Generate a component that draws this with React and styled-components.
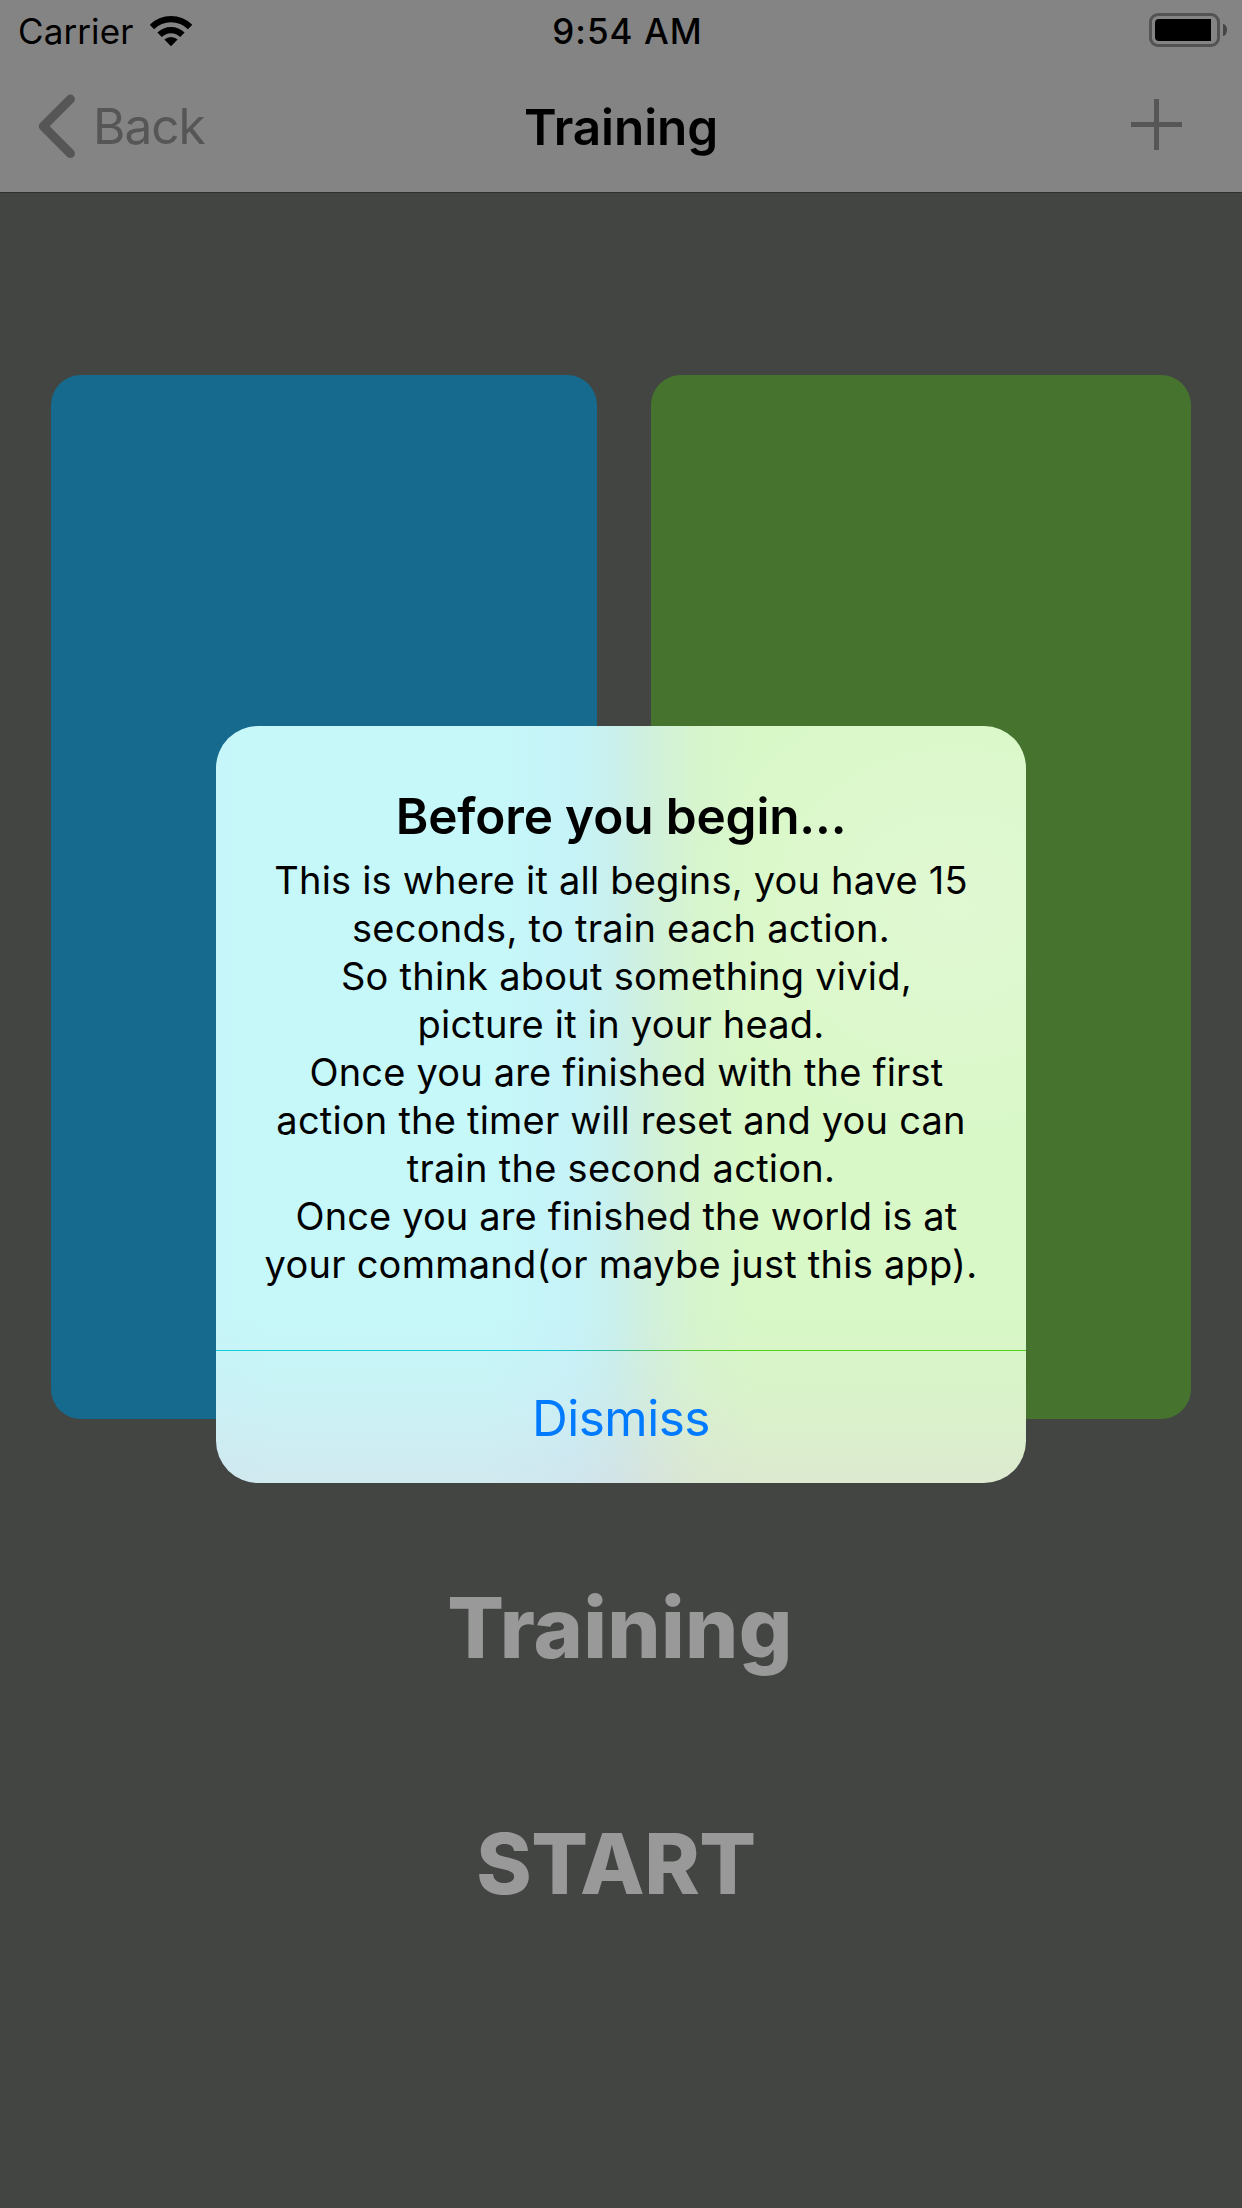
import React from "react";
import styled, { createGlobalStyle } from "styled-components";

const GlobalStyle = createGlobalStyle`
  *, *::before, *::after { box-sizing: border-box; }
  body {
    margin: 0;
    background: #434543;
    font-family: Inter, "Liberation Sans", sans-serif;
  }
  button {
    border: 0;
    padding: 0;
    background: none;
    font-family: inherit;
    cursor: pointer;
  }
`;

const Screen = styled.div`
  position: relative;
  display: flex;
  flex-direction: column;
  width: 1242px;
  height: 2208px;
  overflow: hidden;
  background: #434543;
`;

const Header = styled.header`
  height: 193px;
  background: #848484;
  border-bottom: 1px solid #2f312f;
`;

const StatusBar = styled.div`
  display: grid;
  grid-template-columns: 1fr auto 1fr;
  align-items: center;
  height: 60px;
  padding: 2px 15px 0 18px;
  font-size: 35px;
  line-height: 58px;
  color: #000;
`;

const Carrier = styled.div`
  display: flex;
  align-items: center;
  gap: 17px;
  letter-spacing: 0.1px;
`;

const Clock = styled.time`
  padding-left: 10px;
  font-weight: 500;
  letter-spacing: 1.05px;
`;

const Battery = styled.div`
  display: flex;
  justify-self: end;
  align-items: center;
  gap: 3px;
  margin-top: -2px;
`;

const BatteryBody = styled.div`
  width: 71px;
  height: 34px;
  padding: 3px;
  border: 3px solid #535353;
  border-radius: 9px;
`;

const BatteryLevel = styled.div`
  width: 56px;
  height: 22px;
  border-radius: 4px 0 0 4px;
  background: #000;
`;

const BatteryCap = styled.div`
  width: 4px;
  height: 12px;
  border-radius: 0 4px 4px 0 / 0 6px 6px 0;
  background: #454545;
`;

const NavBar = styled.nav`
  display: grid;
  grid-template-columns: 1fr auto 1fr;
  align-items: center;
  height: 132px;
  padding: 0 60px 0 38px;
`;

const BackButton = styled.button`
  display: flex;
  justify-self: start;
  align-items: center;
  gap: 17px;
  font-size: 49.5px;
  line-height: 60px;
  letter-spacing: -1px;
  color: #565656;
`;

const NavTitle = styled.h1`
  margin: 0;
  padding: 2px 0 0 22px;
  font-size: 49.5px;
  font-weight: 600;
  line-height: 60px;
  letter-spacing: -0.1px;
  color: #000;
`;

const AddButton = styled.button`
  display: flex;
  justify-self: end;
  margin-top: -3px;
`;

const Content = styled.main`
  display: flex;
  flex: 1;
  flex-direction: column;
  align-items: center;
  padding-top: 182px;
`;

const Cards = styled.section`
  display: flex;
  gap: 54px;
  height: 1044px;
`;

const Card = styled.div`
  width: ${(p) => p.$width}px;
  border-radius: 30px;
  background: ${(p) => p.$color};
`;

const PhaseLabel = styled.h2`
  margin: 158px 2px 0 0;
  font-size: 84px;
  font-weight: 800;
  line-height: 102px;
  letter-spacing: 0.27px;
  color: #999;
`;

const StartButton = styled.button`
  margin: 134px 10px 0 0;
  font-size: 84px;
  font-weight: 800;
  line-height: 102px;
  letter-spacing: -0.5px;
  color: #999;
`;

const Overlay = styled.div`
  position: absolute;
  inset: 0;
  display: flex;
  align-items: center;
  justify-content: center;
  padding-top: 1px;
`;

const Dialog = styled.div`
  width: 810px;
  border-radius: 42px;
  overflow: hidden;
  background:
    linear-gradient(
      to bottom,
      rgba(228, 206, 222, 0) 590px,
      rgba(228, 206, 222, 0.1) 660px,
      rgba(228, 206, 222, 0.35) 757px
    ),
    radial-gradient(
      300px 260px at 740px 180px,
      rgba(235, 248, 224, 0.45),
      rgba(235, 248, 224, 0)
    ),
    linear-gradient(
      to right,
      #c6f6f9 0,
      #c6f8f9 60px,
      #c6f8f9 270px,
      #c6f3f8 355px,
      #c9f0ec 398px,
      #d1f0dc 435px,
      #d6f5cd 480px,
      #d8f8c7 540px,
      #d8f8c7 810px
    );
`;

const DialogBody = styled.div`
  padding: 60px 0 62px;
  text-align: center;
  color: #000;
`;

const DialogTitle = styled.h3`
  margin: 0 0 9px;
  font-size: 49.5px;
  font-weight: 600;
  line-height: 61px;
  letter-spacing: -0.14px;
`;

const Message = styled.div`
  font-size: 38px;
  line-height: 48px;
  white-space: pre;
`;

const MessageLine = styled.div`
  letter-spacing: ${(p) => p.$tracking}px;
`;

const Divider = styled.div`
  height: 1px;
  background: linear-gradient(
    to right,
    #12cfd9 0,
    #12cad9 330px,
    #2fb89a 400px,
    #50c83c 450px,
    #50d018 520px
  );
`;

const DismissButton = styled.button`
  display: block;
  width: 100%;
  height: 132px;
  padding: 2px 0 0;
  font-size: 49.5px;
  line-height: 60px;
  letter-spacing: -0.5px;
  color: #007aff;
`;

const lines = [
  { text: "This is where it all begins, you have 15", tracking: 0.19 },
  { text: "seconds, to train each action.", tracking: 0.28 },
  { text: " So think about something vivid,", tracking: 0.26 },
  { text: "picture it in your head.", tracking: 0.22 },
  { text: " Once you are finished with the first", tracking: 0.17 },
  { text: "action the timer will reset and you can", tracking: 0.21 },
  { text: "train the second action.", tracking: 0.27 },
  { text: " Once you are finished the world is at", tracking: 0.14 },
  { text: "your command(or maybe just this app).", tracking: 0.24 },
];

const WifiIcon = () => (
  <svg width="42" height="31" viewBox="0 0 42 31" fill="#000" aria-hidden="true">
    <path d="M21 30.3 14.4 23.6A9.4 9.4 0 0 1 27.6 23.6Z" />
    <path d="M11.8 21 7.4 16.6A19.3 19.3 0 0 1 34.6 16.6L30.2 21A13 13 0 0 0 11.8 21Z" />
    <path d="M4.1 13.2-.3 8.8A30.2 30.2 0 0 1 42.3 8.8L37.9 13.2A24 24 0 0 0 4.1 13.2Z" />
  </svg>
);

const ChevronIcon = () => (
  <svg width="38" height="64" viewBox="0 0 38 64" fill="none" aria-hidden="true">
    <path
      d="M32.4 5.1 5.3 32.3 32.4 59.5"
      stroke="#565656"
      strokeWidth="9"
      strokeLinecap="round"
      strokeLinejoin="round"
    />
  </svg>
);

const PlusIcon = () => (
  <svg width="51" height="51" viewBox="0 0 51 51" fill="#565656" aria-hidden="true">
    <path d="M23 0h5v23h23v5H28v23h-5V28H0v-5h23z" />
  </svg>
);

export default function App() {
  return (
    <Screen>
      <GlobalStyle />
      <Header>
        <StatusBar>
          <Carrier>
            Carrier
            <WifiIcon />
          </Carrier>
          <Clock>9:54 AM</Clock>
          <Battery>
            <BatteryBody>
              <BatteryLevel />
            </BatteryBody>
            <BatteryCap />
          </Battery>
        </StatusBar>
        <NavBar>
          <BackButton>
            <ChevronIcon />
            Back
          </BackButton>
          <NavTitle>Training</NavTitle>
          <AddButton aria-label="Add">
            <PlusIcon />
          </AddButton>
        </NavBar>
      </Header>
      <Content>
        <Cards>
          <Card $width={546} $color="#156a8d" />
          <Card $width={540} $color="#46732d" />
        </Cards>
        <PhaseLabel>Training</PhaseLabel>
        <StartButton>START</StartButton>
      </Content>
      <Overlay>
        <Dialog role="dialog">
          <DialogBody>
            <DialogTitle>Before you begin...</DialogTitle>
            <Message>
              {lines.map((line) => (
                <MessageLine key={line.text} $tracking={line.tracking}>
                  {line.text}
                </MessageLine>
              ))}
            </Message>
          </DialogBody>
          <Divider />
          <DismissButton>Dismiss</DismissButton>
        </Dialog>
      </Overlay>
    </Screen>
  );
}
